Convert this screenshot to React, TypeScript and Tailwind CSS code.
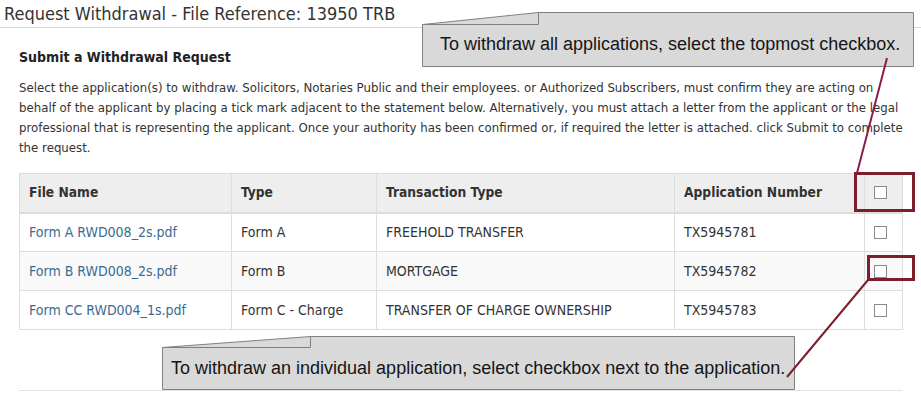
const rows = [
  { file: 'Form A RWD008_2s.pdf', type: 'Form A', tx: 'FREEHOLD TRANSFER', app: 'TX5945781', alt: false },
  { file: 'Form B RWD008_2s.pdf', type: 'Form B', tx: 'MORTGAGE', app: 'TX5945782', alt: true },
  { file: 'Form CC RWD004_1s.pdf', type: 'Form C - Charge', tx: 'TRANSFER OF CHARGE OWNERSHIP', app: 'TX5945783', alt: false },
];

const Box = () => <span className="block h-[13px] w-[13px] border border-[#8a8a8a] bg-white" />;

export default function App() {
  return (
    <div className="relative h-[400px] w-[921px] overflow-hidden bg-white font-['DejaVu_Sans_Condensed','DejaVu_Sans',sans-serif] text-[#333]">
      {/* page title */}
      <div className="h-[28px] border-b border-[#d8d8d8] pl-[4px] text-[18px] leading-[27px] text-[#333]">
        Request Withdrawal - File Reference: 13950 TRB
      </div>

      <div className="px-[19px]">
        <h2 className="mt-[19px] text-[14px] font-bold leading-[20px] text-[#222]">Submit a Withdrawal Request</h2>
        <p className="mt-[11px] whitespace-nowrap text-[13.1px] leading-[20px] text-[#333]">
          Select the application(s) to withdraw. Solicitors, Notaries Public and their employees. or Authorized Subscribers, must confirm they are acting on
          <br />
          behalf of the applicant by placing a tick mark adjacent to the statement below. Alternatively, you must attach a letter from the applicant or the legal
          <br />
          professional that is representing the applicant. Once your authority has been confirmed or, if required the letter is attached. click Submit to complete
          <br />
          the request.
        </p>

        <table className="mt-[15px] w-[883px] table-fixed border-collapse text-[14px]">
          <colgroup>
            <col className="w-[212px]" />
            <col className="w-[145px]" />
            <col className="w-[298px]" />
            <col className="w-[190px]" />
            <col className="w-[38px]" />
          </colgroup>
          <thead>
            <tr className="h-[39px] bg-[#eeeeee] text-[13.7px]">
              <th className="border border-b-2 border-[#dddddd] px-[9px] text-left font-bold text-[#333]">File Name</th>
              <th className="border border-b-2 border-[#dddddd] px-[9px] text-left font-bold text-[#333]">Type</th>
              <th className="border border-b-2 border-[#dddddd] px-[9px] text-left font-bold text-[#333]">Transaction Type</th>
              <th className="border border-b-2 border-[#dddddd] px-[9px] text-left font-bold text-[#333]">Application Number</th>
              <th className="border border-b-2 border-[#dddddd] pl-[9px]"><Box /></th>
            </tr>
          </thead>
          <tbody>
            {rows.map((r) => (
              <tr key={r.app} className={r.alt ? 'h-[39px] bg-[#f9f9f9]' : 'h-[39px] bg-white'}>
                <td className="border border-[#dddddd] px-[9px] text-[#3a6b93]">{r.file}</td>
                <td className="border border-[#dddddd] px-[9px]">{r.type}</td>
                <td className="border border-[#dddddd] px-[9px]">{r.tx}</td>
                <td className="border border-[#dddddd] px-[9px]">{r.app}</td>
                <td className="border border-[#dddddd] pl-[9px]"><Box /></td>
              </tr>
            ))}
          </tbody>
        </table>

        <div className="mt-[60px] w-[883px] border-t border-[#e2e2e2]" />
      </div>

      {/* annotation overlay */}
      <svg className="pointer-events-none absolute left-0 top-0" width="921" height="400">
        <polygon points="422.5,24.5 538.5,12.5 913.5,12.5 913.5,66.5 422.5,66.5" fill="#d9d9d9" stroke="#808080" />
        <path d="M422.5 24.5 H538.5 V12.5" fill="none" stroke="#808080" />
        <polygon points="162.5,347.5 310.5,336.5 794.5,336.5 794.5,389.5 162.5,389.5" fill="#d9d9d9" stroke="#808080" />
        <path d="M162.5 347.5 H310.5 V336.5" fill="none" stroke="#808080" />
        <rect x="855.5" y="173.5" width="58" height="37" fill="none" stroke="#7a1f2b" strokeWidth="3" />
        <rect x="868.5" y="256.5" width="45" height="23" fill="none" stroke="#7a1f2b" strokeWidth="3" />
        <line x1="887" y1="58" x2="857" y2="173" stroke="#8c1c4c" strokeWidth="2" />
        <line x1="868" y1="280" x2="787" y2="377" stroke="#7d1e2a" strokeWidth="2" />
      </svg>
      <div className="absolute left-[440px] top-[32px] whitespace-nowrap font-['Liberation_Sans',Arial,sans-serif] text-[18px] leading-[24px] text-[#151515]">
        To withdraw all applications, select the topmost checkbox.
      </div>
      <div className="absolute left-[171px] top-[356px] whitespace-nowrap font-['Liberation_Sans',Arial,sans-serif] text-[18px] leading-[24px] text-[#151515]">
        To withdraw an individual application, select checkbox next to the application.
      </div>
    </div>
  );
}
